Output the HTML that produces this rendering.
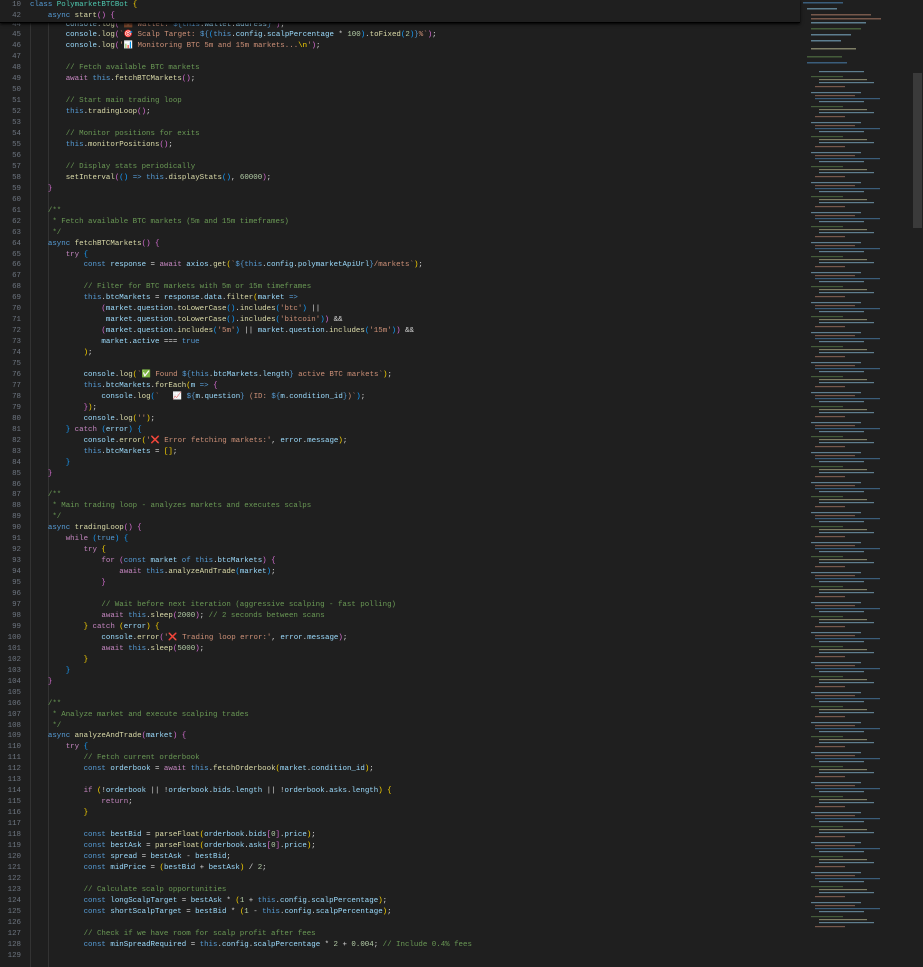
<!DOCTYPE html>
<html><head><meta charset="utf-8"><style>
html,body{margin:0;padding:0;background:#1f1f1f;width:923px;height:967px;overflow:hidden}
body{position:relative;font-family:"Liberation Mono","DejaVu Sans Mono",monospace;font-size:7.45px;color:#d4d4d4}
.ln{position:absolute;left:0;width:21px;text-align:right;color:#6e7681}
.cd{position:absolute;left:30px;white-space:pre}
#code{position:absolute;top:19.5px;left:0;width:800px}
.row{height:10.96px;line-height:10.96px;position:relative}
.k{color:#569cd6}.c{color:#c586c0}.f{color:#dcdcaa}.v{color:#9cdcfe}.s{color:#ce9178}.m{color:#6a9955}.n{color:#b5cea8}.g{color:#ffd700}.o{color:#da70d6}.b{color:#179fff}.t{color:#4ec9b0}
#sticky{position:absolute;top:0;left:0;width:800px;height:22px;background:#1f1f1f;border-bottom:1px solid #000;box-shadow:0 1px 3px #000;z-index:2;padding-top:0}
#sticky .row{height:11px;line-height:11px}
#mm{position:absolute;left:803px;top:0;width:107px;height:967px}
#sb{position:absolute;left:913px;top:73px;width:9px;height:155px;background:#3a3a3a}
.gd{position:absolute;width:1px;background:#333}
</style></head><body>
<div class="gd" style="left:30px;top:22px;height:945px"></div>
<div class="gd" style="left:48px;top:22px;height:945px"></div>
<div id="code">
<div class="row"><span class="ln">44</span><span class="cd">        <span class="v">console</span>.<span class="f">log</span><span class="o">(</span><span class="s">`💼 Wallet: </span><span class="k">${this</span>.<span class="v">wallet</span>.<span class="v">address</span><span class="k">}</span><span class="s">`</span><span class="o">)</span>;</span></div>
<div class="row"><span class="ln">45</span><span class="cd">        <span class="v">console</span>.<span class="f">log</span><span class="o">(</span><span class="s">`🎯 Scalp Target: </span><span class="k">${</span><span class="b">(</span><span class="k">this</span>.<span class="v">config</span>.<span class="v">scalpPercentage</span> * <span class="n">100</span><span class="b">)</span>.<span class="f">toFixed</span><span class="b">(</span><span class="n">2</span><span class="b">)</span><span class="k">}</span><span class="s">%`</span><span class="o">)</span>;</span></div>
<div class="row"><span class="ln">46</span><span class="cd">        <span class="v">console</span>.<span class="f">log</span><span class="o">(</span><span class="s">'📊 Monitoring BTC 5m and 15m markets...</span><span class="g">\n</span><span class="s">'</span><span class="o">)</span>;</span></div>
<div class="row"><span class="ln">47</span></div>
<div class="row"><span class="ln">48</span><span class="cd">        <span class="m">// Fetch available BTC markets</span></span></div>
<div class="row"><span class="ln">49</span><span class="cd">        <span class="c">await</span> <span class="k">this</span>.<span class="f">fetchBTCMarkets</span><span class="o">()</span>;</span></div>
<div class="row"><span class="ln">50</span></div>
<div class="row"><span class="ln">51</span><span class="cd">        <span class="m">// Start main trading loop</span></span></div>
<div class="row"><span class="ln">52</span><span class="cd">        <span class="k">this</span>.<span class="f">tradingLoop</span><span class="o">()</span>;</span></div>
<div class="row"><span class="ln">53</span></div>
<div class="row"><span class="ln">54</span><span class="cd">        <span class="m">// Monitor positions for exits</span></span></div>
<div class="row"><span class="ln">55</span><span class="cd">        <span class="k">this</span>.<span class="f">monitorPositions</span><span class="o">()</span>;</span></div>
<div class="row"><span class="ln">56</span></div>
<div class="row"><span class="ln">57</span><span class="cd">        <span class="m">// Display stats periodically</span></span></div>
<div class="row"><span class="ln">58</span><span class="cd">        <span class="f">setInterval</span><span class="o">(</span><span class="b">()</span> <span class="k">=&gt;</span> <span class="k">this</span>.<span class="f">displayStats</span><span class="b">()</span>, <span class="n">60000</span><span class="o">)</span>;</span></div>
<div class="row"><span class="ln">59</span><span class="cd">    <span class="o">}</span></span></div>
<div class="row"><span class="ln">60</span></div>
<div class="row"><span class="ln">61</span><span class="cd">    <span class="m">/**</span></span></div>
<div class="row"><span class="ln">62</span><span class="cd">    <span class="m"> * Fetch available BTC markets (5m and 15m timeframes)</span></span></div>
<div class="row"><span class="ln">63</span><span class="cd">    <span class="m"> */</span></span></div>
<div class="row"><span class="ln">64</span><span class="cd">    <span class="k">async</span> <span class="f">fetchBTCMarkets</span><span class="o">()</span> <span class="o">{</span></span></div>
<div class="row"><span class="ln">65</span><span class="cd">        <span class="c">try</span> <span class="b">{</span></span></div>
<div class="row"><span class="ln">66</span><span class="cd">            <span class="k">const</span> <span class="v">response</span> = <span class="c">await</span> <span class="v">axios</span>.<span class="f">get</span><span class="g">(</span><span class="s">`</span><span class="k">${this</span>.<span class="v">config</span>.<span class="v">polymarketApiUrl</span><span class="k">}</span><span class="s">/markets`</span><span class="g">)</span>;</span></div>
<div class="row"><span class="ln">67</span></div>
<div class="row"><span class="ln">68</span><span class="cd">            <span class="m">// Filter for BTC markets with 5m or 15m timeframes</span></span></div>
<div class="row"><span class="ln">69</span><span class="cd">            <span class="k">this</span>.<span class="v">btcMarkets</span> = <span class="v">response</span>.<span class="v">data</span>.<span class="f">filter</span><span class="g">(</span><span class="v">market</span> <span class="k">=&gt;</span></span></div>
<div class="row"><span class="ln">70</span><span class="cd">                <span class="o">(</span><span class="v">market</span>.<span class="v">question</span>.<span class="f">toLowerCase</span><span class="b">()</span>.<span class="f">includes</span><span class="b">(</span><span class="s">'btc'</span><span class="b">)</span> ||</span></div>
<div class="row"><span class="ln">71</span><span class="cd">                 <span class="v">market</span>.<span class="v">question</span>.<span class="f">toLowerCase</span><span class="b">()</span>.<span class="f">includes</span><span class="b">(</span><span class="s">'bitcoin'</span><span class="b">)</span><span class="o">)</span> &amp;&amp;</span></div>
<div class="row"><span class="ln">72</span><span class="cd">                <span class="o">(</span><span class="v">market</span>.<span class="v">question</span>.<span class="f">includes</span><span class="b">(</span><span class="s">'5m'</span><span class="b">)</span> || <span class="v">market</span>.<span class="v">question</span>.<span class="f">includes</span><span class="b">(</span><span class="s">'15m'</span><span class="b">)</span><span class="o">)</span> &amp;&amp;</span></div>
<div class="row"><span class="ln">73</span><span class="cd">                <span class="v">market</span>.<span class="v">active</span> === <span class="k">true</span></span></div>
<div class="row"><span class="ln">74</span><span class="cd">            <span class="g">)</span>;</span></div>
<div class="row"><span class="ln">75</span></div>
<div class="row"><span class="ln">76</span><span class="cd">            <span class="v">console</span>.<span class="f">log</span><span class="g">(</span><span class="s">`✅ Found </span><span class="k">${this</span>.<span class="v">btcMarkets</span>.<span class="v">length</span><span class="k">}</span><span class="s"> active BTC markets`</span><span class="g">)</span>;</span></div>
<div class="row"><span class="ln">77</span><span class="cd">            <span class="k">this</span>.<span class="v">btcMarkets</span>.<span class="f">forEach</span><span class="g">(</span><span class="v">m</span> <span class="k">=&gt;</span> <span class="o">{</span></span></div>
<div class="row"><span class="ln">78</span><span class="cd">                <span class="v">console</span>.<span class="f">log</span><span class="b">(</span><span class="s">`   📈 </span><span class="k">${</span><span class="v">m</span>.<span class="v">question</span><span class="k">}</span><span class="s"> (ID: </span><span class="k">${</span><span class="v">m</span>.<span class="v">condition_id</span><span class="k">}</span><span class="s">)`</span><span class="b">)</span>;</span></div>
<div class="row"><span class="ln">79</span><span class="cd">            <span class="o">}</span><span class="g">)</span>;</span></div>
<div class="row"><span class="ln">80</span><span class="cd">            <span class="v">console</span>.<span class="f">log</span><span class="g">(</span><span class="s">''</span><span class="g">)</span>;</span></div>
<div class="row"><span class="ln">81</span><span class="cd">        <span class="b">}</span> <span class="c">catch</span> <span class="b">(</span><span class="v">error</span><span class="b">)</span> <span class="b">{</span></span></div>
<div class="row"><span class="ln">82</span><span class="cd">            <span class="v">console</span>.<span class="f">error</span><span class="g">(</span><span class="s">'❌ Error fetching markets:'</span>, <span class="v">error</span>.<span class="v">message</span><span class="g">)</span>;</span></div>
<div class="row"><span class="ln">83</span><span class="cd">            <span class="k">this</span>.<span class="v">btcMarkets</span> = <span class="g">[]</span>;</span></div>
<div class="row"><span class="ln">84</span><span class="cd">        <span class="b">}</span></span></div>
<div class="row"><span class="ln">85</span><span class="cd">    <span class="o">}</span></span></div>
<div class="row"><span class="ln">86</span></div>
<div class="row"><span class="ln">87</span><span class="cd">    <span class="m">/**</span></span></div>
<div class="row"><span class="ln">88</span><span class="cd">    <span class="m"> * Main trading loop - analyzes markets and executes scalps</span></span></div>
<div class="row"><span class="ln">89</span><span class="cd">    <span class="m"> */</span></span></div>
<div class="row"><span class="ln">90</span><span class="cd">    <span class="k">async</span> <span class="f">tradingLoop</span><span class="o">()</span> <span class="o">{</span></span></div>
<div class="row"><span class="ln">91</span><span class="cd">        <span class="c">while</span> <span class="b">(</span><span class="k">true</span><span class="b">)</span> <span class="b">{</span></span></div>
<div class="row"><span class="ln">92</span><span class="cd">            <span class="c">try</span> <span class="g">{</span></span></div>
<div class="row"><span class="ln">93</span><span class="cd">                <span class="c">for</span> <span class="o">(</span><span class="k">const</span> <span class="v">market</span> <span class="k">of</span> <span class="k">this</span>.<span class="v">btcMarkets</span><span class="o">)</span> <span class="o">{</span></span></div>
<div class="row"><span class="ln">94</span><span class="cd">                    <span class="c">await</span> <span class="k">this</span>.<span class="f">analyzeAndTrade</span><span class="b">(</span><span class="v">market</span><span class="b">)</span>;</span></div>
<div class="row"><span class="ln">95</span><span class="cd">                <span class="o">}</span></span></div>
<div class="row"><span class="ln">96</span></div>
<div class="row"><span class="ln">97</span><span class="cd">                <span class="m">// Wait before next iteration (aggressive scalping - fast polling)</span></span></div>
<div class="row"><span class="ln">98</span><span class="cd">                <span class="c">await</span> <span class="k">this</span>.<span class="f">sleep</span><span class="o">(</span><span class="n">2000</span><span class="o">)</span>; <span class="m">// 2 seconds between scans</span></span></div>
<div class="row"><span class="ln">99</span><span class="cd">            <span class="g">}</span> <span class="c">catch</span> <span class="g">(</span><span class="v">error</span><span class="g">)</span> <span class="g">{</span></span></div>
<div class="row"><span class="ln">100</span><span class="cd">                <span class="v">console</span>.<span class="f">error</span><span class="o">(</span><span class="s">'❌ Trading loop error:'</span>, <span class="v">error</span>.<span class="v">message</span><span class="o">)</span>;</span></div>
<div class="row"><span class="ln">101</span><span class="cd">                <span class="c">await</span> <span class="k">this</span>.<span class="f">sleep</span><span class="o">(</span><span class="n">5000</span><span class="o">)</span>;</span></div>
<div class="row"><span class="ln">102</span><span class="cd">            <span class="g">}</span></span></div>
<div class="row"><span class="ln">103</span><span class="cd">        <span class="b">}</span></span></div>
<div class="row"><span class="ln">104</span><span class="cd">    <span class="o">}</span></span></div>
<div class="row"><span class="ln">105</span></div>
<div class="row"><span class="ln">106</span><span class="cd">    <span class="m">/**</span></span></div>
<div class="row"><span class="ln">107</span><span class="cd">    <span class="m"> * Analyze market and execute scalping trades</span></span></div>
<div class="row"><span class="ln">108</span><span class="cd">    <span class="m"> */</span></span></div>
<div class="row"><span class="ln">109</span><span class="cd">    <span class="k">async</span> <span class="f">analyzeAndTrade</span><span class="o">(</span><span class="v">market</span><span class="o">)</span> <span class="o">{</span></span></div>
<div class="row"><span class="ln">110</span><span class="cd">        <span class="c">try</span> <span class="b">{</span></span></div>
<div class="row"><span class="ln">111</span><span class="cd">            <span class="m">// Fetch current orderbook</span></span></div>
<div class="row"><span class="ln">112</span><span class="cd">            <span class="k">const</span> <span class="v">orderbook</span> = <span class="c">await</span> <span class="k">this</span>.<span class="f">fetchOrderbook</span><span class="g">(</span><span class="v">market</span>.<span class="v">condition_id</span><span class="g">)</span>;</span></div>
<div class="row"><span class="ln">113</span></div>
<div class="row"><span class="ln">114</span><span class="cd">            <span class="c">if</span> <span class="g">(</span>!<span class="v">orderbook</span> || !<span class="v">orderbook</span>.<span class="v">bids</span>.<span class="v">length</span> || !<span class="v">orderbook</span>.<span class="v">asks</span>.<span class="v">length</span><span class="g">)</span> <span class="g">{</span></span></div>
<div class="row"><span class="ln">115</span><span class="cd">                <span class="c">return</span>;</span></div>
<div class="row"><span class="ln">116</span><span class="cd">            <span class="g">}</span></span></div>
<div class="row"><span class="ln">117</span></div>
<div class="row"><span class="ln">118</span><span class="cd">            <span class="k">const</span> <span class="v">bestBid</span> = <span class="f">parseFloat</span><span class="g">(</span><span class="v">orderbook</span>.<span class="v">bids</span><span class="o">[</span><span class="n">0</span><span class="o">]</span>.<span class="v">price</span><span class="g">)</span>;</span></div>
<div class="row"><span class="ln">119</span><span class="cd">            <span class="k">const</span> <span class="v">bestAsk</span> = <span class="f">parseFloat</span><span class="g">(</span><span class="v">orderbook</span>.<span class="v">asks</span><span class="o">[</span><span class="n">0</span><span class="o">]</span>.<span class="v">price</span><span class="g">)</span>;</span></div>
<div class="row"><span class="ln">120</span><span class="cd">            <span class="k">const</span> <span class="v">spread</span> = <span class="v">bestAsk</span> - <span class="v">bestBid</span>;</span></div>
<div class="row"><span class="ln">121</span><span class="cd">            <span class="k">const</span> <span class="v">midPrice</span> = <span class="g">(</span><span class="v">bestBid</span> + <span class="v">bestAsk</span><span class="g">)</span> / <span class="n">2</span>;</span></div>
<div class="row"><span class="ln">122</span></div>
<div class="row"><span class="ln">123</span><span class="cd">            <span class="m">// Calculate scalp opportunities</span></span></div>
<div class="row"><span class="ln">124</span><span class="cd">            <span class="k">const</span> <span class="v">longScalpTarget</span> = <span class="v">bestAsk</span> * <span class="g">(</span><span class="n">1</span> + <span class="k">this</span>.<span class="v">config</span>.<span class="v">scalpPercentage</span><span class="g">)</span>;</span></div>
<div class="row"><span class="ln">125</span><span class="cd">            <span class="k">const</span> <span class="v">shortScalpTarget</span> = <span class="v">bestBid</span> * <span class="g">(</span><span class="n">1</span> - <span class="k">this</span>.<span class="v">config</span>.<span class="v">scalpPercentage</span><span class="g">)</span>;</span></div>
<div class="row"><span class="ln">126</span></div>
<div class="row"><span class="ln">127</span><span class="cd">            <span class="m">// Check if we have room for scalp profit after fees</span></span></div>
<div class="row"><span class="ln">128</span><span class="cd">            <span class="k">const</span> <span class="v">minSpreadRequired</span> = <span class="k">this</span>.<span class="v">config</span>.<span class="v">scalpPercentage</span> * <span class="n">2</span> + <span class="n">0.004</span>; <span class="m">// Include 0.4% fees</span></span></div>
<div class="row"><span class="ln">129</span></div>
</div>
<div id="sticky">
<div class="row"><span class="ln">10</span><span class="cd"><span class="k">class</span> <span class="t">PolymarketBTCBot</span> <span class="g">{</span></span></div>
<div class="row"><span class="ln">42</span><span class="cd">    <span class="k">async</span> <span class="f">start</span><span class="o">()</span> <span class="o">{</span></span></div>
</div>
<svg id="mm" width="107" height="967">
<defs><pattern id="pt" width="107" height="30" patternUnits="userSpaceOnUse">
<rect x="8" y="2" width="50" height="1.2" fill="#9cdcfe"/><rect x="12" y="5" width="40" height="1.2" fill="#ce9178"/><rect x="12" y="8" width="65" height="1.2" fill="#569cd6"/><rect x="16" y="11" width="45" height="1.2" fill="#9cdcfe"/><rect x="8" y="16" width="32" height="1.2" fill="#6a9955"/><rect x="16" y="19" width="48" height="1.2" fill="#dcdcaa"/><rect x="16" y="22" width="55" height="1.2" fill="#9cdcfe"/><rect x="12" y="26" width="30" height="1.2" fill="#ce9178"/>
</pattern></defs>
<g opacity="0.5">
<rect x="0" y="2" width="40" height="1.5" fill="#569cd6"/><rect x="4" y="8" width="30" height="1.5" fill="#9cdcfe"/>
<rect x="8" y="14" width="60" height="1.5" fill="#ce9178"/><rect x="8" y="18" width="70" height="1.5" fill="#ce9178"/><rect x="8" y="22" width="55" height="1.5" fill="#9cdcfe"/>
<rect x="8" y="28" width="50" height="1.5" fill="#6a9955"/><rect x="8" y="34" width="40" height="1.5" fill="#9cdcfe"/><rect x="8" y="40" width="30" height="1.5" fill="#9cdcfe"/>
<rect x="8" y="48" width="45" height="1.5" fill="#dcdcaa"/><rect x="4" y="56" width="35" height="1.5" fill="#6a9955"/><rect x="4" y="62" width="40" height="1.5" fill="#569cd6"/>
<rect x="0" y="70" width="107" height="860" fill="url(#pt)"/>
</g>
</svg>
<div id="sb"></div>
</body></html>
